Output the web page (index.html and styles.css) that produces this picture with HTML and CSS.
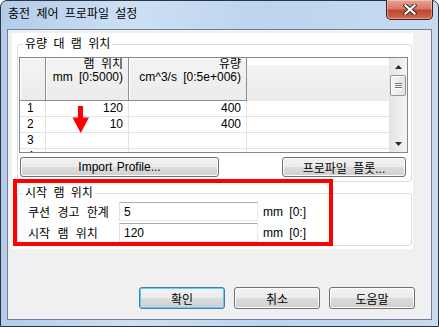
FILE: index.html
```html
<!DOCTYPE html>
<html lang="ko">
<head>
  <meta charset="UTF-8" />
  <title>충전 제어 프로파일 설정</title>
  <link rel="stylesheet" href="styles.css">
</head>
<body>
  <div class="window">
    <div class="titlebar">
      <span class="title">충전 제어 프로파일 설정</span>
      <button class="close-btn" type="button" aria-label="닫기">
        <svg width="14" height="11" viewBox="0 0 14 11">
          <path d="M2.5 1.5 L11.5 9.5 M11.5 1.5 L2.5 9.5" stroke="#3a2a28" stroke-width="4.2" stroke-linecap="square" fill="none"/>
          <path d="M2.5 1.5 L11.5 9.5 M11.5 1.5 L2.5 9.5" stroke="#fff" stroke-width="2.2" stroke-linecap="square" fill="none"/>
        </svg>
      </button>
    </div>

    <div class="client">
      <div class="panel">
        <fieldset class="group group-flow">
          <legend>유량 대 램 위치</legend>
          <div class="grid">
            <div class="grid-body">
              <div class="head"></div>
              <div class="head">램 위치<br>mm [0:5000)</div>
              <div class="head">유량<br>cm^3/s [0:5e+006)</div>
              <div class="head-empty"></div>

              <div class="cell row-no">1</div>
              <div class="cell">120</div>
              <div class="cell">400</div>
              <div class="cell cell-empty"></div>

              <div class="cell row-no">2</div>
              <div class="cell">10</div>
              <div class="cell">400</div>
              <div class="cell cell-empty"></div>

              <div class="cell row-no">3</div>
              <div class="cell"></div>
              <div class="cell"></div>
              <div class="cell cell-empty"></div>

              <div class="cell row-no">4</div>
              <div class="cell"></div>
              <div class="cell"></div>
              <div class="cell cell-empty"></div>
            </div>
            <div class="vscroll">
              <div class="sb-arrow">
                <svg width="7" height="4" viewBox="0 0 7 4"><path d="M3.5 0 L7 4 L0 4 Z" fill="#2b2b2b"/></svg>
              </div>
              <div class="sb-thumb"><span></span><span></span><span></span></div>
              <div class="sb-track"></div>
              <div class="sb-arrow">
                <svg width="7" height="4" viewBox="0 0 7 4"><path d="M0 0 L7 0 L3.5 4 Z" fill="#2b2b2b"/></svg>
              </div>
            </div>
          </div>
          <div class="grid-buttons">
            <button class="btn btn-import" type="button">Import Profile...</button>
            <button class="btn btn-plot" type="button">프로파일 플롯...</button>
          </div>
        </fieldset>

        <fieldset class="group group-start">
          <legend>시작 램 위치</legend>
          <div class="field-row">
            <label class="field-label">쿠션 경고 한계</label>
            <input class="field-input" type="text" value="5">
            <span class="field-unit">mm [0:]</span>
          </div>
          <div class="field-row">
            <label class="field-label">시작 램 위치</label>
            <input class="field-input" type="text" value="120">
            <span class="field-unit">mm [0:]</span>
          </div>
        </fieldset>
      </div>

      <div class="dialog-buttons">
        <button class="btn btn-dialog btn-default" type="button">확인</button>
        <button class="btn btn-dialog" type="button">취소</button>
        <button class="btn btn-dialog" type="button">도움말</button>
      </div>
    </div>

    <!-- 주석 표시 -->
    <div class="highlight"></div>
    <svg class="red-arrow" width="20" height="30" viewBox="0 0 20 30">
      <rect x="7" y="1" width="5" height="14" fill="#f00"/>
      <path d="M1.5 12.5 L18 12.5 L9.7 28 Z" fill="#f00"/>
    </svg>
  </div>
</body>
</html>
```

FILE: styles.css
```css
:root {
  --frame-border: #2c3440;
  --client-border: #6b819e;
  --face: #f0f0f0;
  --group-border: #d5dfe5;
  --grid-border: #828790;
  --grid-line: #e3e3e3;
  --mark-red: #ff0000;
}

* {
  box-sizing: border-box;
}

html,
body {
  margin: 0;
  padding: 0;
}

body {
  width: 439px;
  height: 327px;
  overflow: hidden;
  font-family: "Liberation Sans", "Noto Sans CJK KR", sans-serif;
  font-size: 12px;
  color: #000;
  background: #fff;
}

.window {
  position: relative;
  width: 439px;
  height: 327px;
  border: 1px solid var(--frame-border);
  border-radius: 7px 7px 0 0;
  padding: 0 6px 6px;
  background: linear-gradient(to right, #b3cce8, #cde0f4 30%, #bcd4ee 60%, #c6dbf1);
  display: flex;
  flex-direction: column;
}

.titlebar {
  height: 28px;
  flex-shrink: 0;
  display: flex;
  align-items: flex-start;
}

.title {
  padding: 6px 0 0 1px;
  line-height: 15px;
  word-spacing: 3px;
}

.close-btn {
  margin: -1px -1px 0 auto;
  width: 47px;
  height: 20px;
  padding: 0;
  border: 1px solid #4a1c17;
  border-top: none;
  border-radius: 0 0 5px 5px;
  background: linear-gradient(#e6a496, #d87a66 45%, #c1452f 55%, #cf6a52);
  box-shadow: inset 0 0 0 1px rgba(255, 255, 255, 0.35);
  display: flex;
  align-items: center;
  justify-content: center;
}

.client {
  flex: 1;
  border: 1px solid var(--client-border);
  background: var(--face);
  display: flex;
  flex-direction: column;
}

.panel {
  margin: 3px 18px 0 4px;
  padding: 4px 1px 3px 5px;
  background: #fff;
}

.group {
  margin: 0;
  min-width: 0;
  border: 1px solid var(--group-border);
  border-radius: 3px;
}

.group legend {
  margin-left: 4px;
  padding: 0 2px;
  line-height: 14px;
  word-spacing: 3px;
}

.group-flow {
  padding: 6px 3px 4px 1px;
}

.group-start {
  margin-top: 4px;
  padding: 2px 3px 3px 1px;
  background: #fff;
}

/* 데이터 그리드 */
.grid {
  width: 389px;
  height: 96px;
  border: 1px solid var(--grid-border);
  background: #fff;
  display: flex;
}

.grid-body {
  flex: 1;
  display: grid;
  grid-template-columns: 26px 83px 118px 1fr;
  grid-template-rows: 43px repeat(4, 16px);
  overflow: hidden;
}

.head {
  background: linear-gradient(#f4f4f4, #ebebeb);
  border-right: 1px solid #8e8e8e;
  border-bottom: 1px solid #8e8e8e;
  box-shadow: inset 1px 1px 0 #fff;
  padding: 0 5px 0 0;
  line-height: 13px;
  text-align: right;
  word-spacing: 3px;
  white-space: nowrap;
}

.head-empty {
  background: linear-gradient(#fff 0 7px, #f3f3f3 7px, #ebebeb);
}

.cell {
  border-right: 1px solid var(--grid-line);
  border-bottom: 1px solid var(--grid-line);
  line-height: 15px;
  padding-right: 5px;
  text-align: right;
}

.row-no {
  text-align: left;
  padding-left: 7px;
}

.cell-empty {
  border-right: none;
}

.vscroll {
  width: 18px;
  background: linear-gradient(to right, #e4e4e4, #f4f4f4);
  display: flex;
  flex-direction: column;
  align-items: center;
}

.sb-arrow {
  height: 17px;
  width: 100%;
  display: flex;
  align-items: center;
  justify-content: center;
}

.sb-thumb {
  width: 16px;
  height: 21px;
  border: 1px solid #959595;
  border-radius: 2px;
  background: linear-gradient(to right, #f6f6f6, #e3e3e3);
  box-shadow: inset 1px 1px 0 #fff;
  display: flex;
  flex-direction: column;
  align-items: center;
  justify-content: center;
  gap: 1px;
}

.sb-thumb span {
  width: 7px;
  height: 1px;
  background: #6e6e6e;
  box-shadow: 0 1px 0 #fff;
}

.sb-track {
  flex: 1;
}

.grid-buttons {
  margin-top: 4px;
  display: flex;
  justify-content: space-between;
  padding: 0 2px 0 1px;
}

/* 버튼 */
.btn {
  margin: 0;
  padding: 0;
  font: inherit;
  color: #000;
  border: 1px solid #707070;
  border-radius: 3px;
  background: linear-gradient(#f2f2f2 0%, #ebebeb 50%, #dddddd 50%, #cfcfcf 100%);
  box-shadow: inset 0 0 0 1px #fcfcfc;
  word-spacing: 3px;
}

.btn-import {
  width: 199px;
  height: 20px;
  word-spacing: 1px;
}

.btn-plot {
  width: 124px;
  height: 20px;
}

.btn-dialog {
  width: 86px;
  height: 22px;
}

.btn-default {
  border-color: #3c7fb1;
  box-shadow: inset 0 0 0 1px #5ccff7;
}

/* 시작 램 위치 */
.field-row {
  display: flex;
  align-items: center;
  height: 19px;
  padding-left: 9px;
}

.field-row + .field-row {
  margin-top: 2px;
}

.field-label {
  width: 91px;
  word-spacing: 4px;
}

.field-input {
  width: 139px;
  height: 19px;
  margin: 0;
  padding: 0 0 0 4px;
  border: 1px solid #abadb3;
  border-color: #abadb3 #e3e9ef #e3e9ef #e2e3ea;
  font: inherit;
  background: #fff;
}

.field-unit {
  margin-left: 5px;
  word-spacing: 3px;
}

.dialog-buttons {
  margin-top: auto;
  padding: 0 16px 10px 0;
  display: flex;
  justify-content: flex-end;
  gap: 9px;
}

/* 빨간 표시 (스크린샷 위 주석) */
.highlight {
  position: absolute;
  left: 12px;
  top: 178px;
  width: 320px;
  height: 67px;
  border: 4px solid var(--mark-red);
}

.red-arrow {
  position: absolute;
  left: 70px;
  top: 104px;
}
```
